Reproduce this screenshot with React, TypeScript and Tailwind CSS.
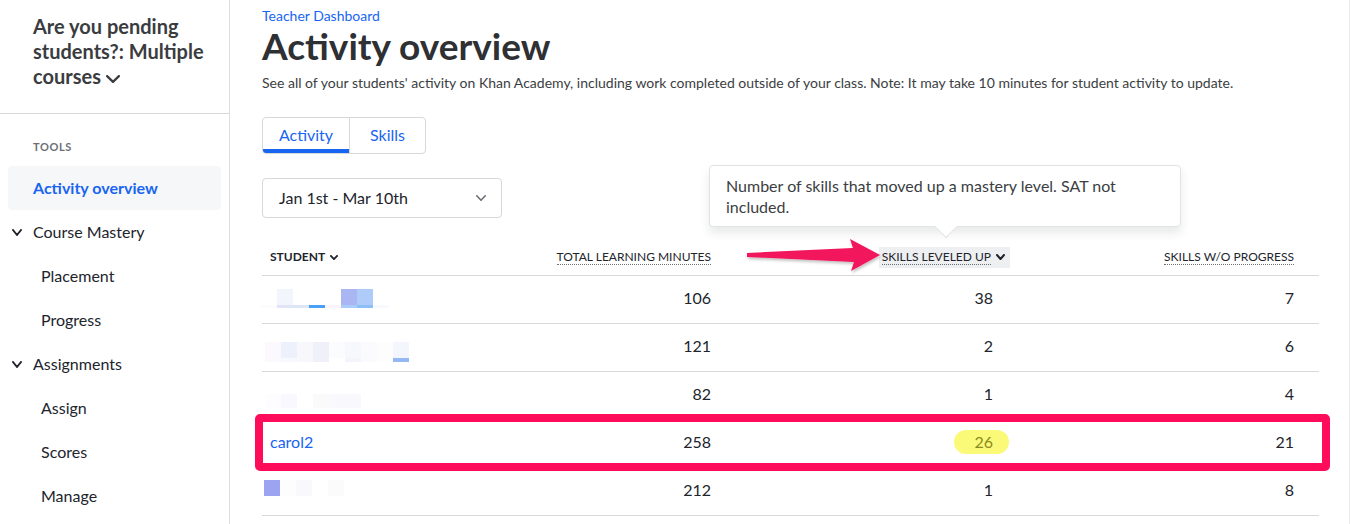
import React from "react";

type Cell = { t: string; b: string };

const Pixels = ({ cells, top, bottom, className }: { cells: Cell[]; top: number; bottom: number; className?: string }) => (
  <div className={"flex " + (className ?? "")}>
    {cells.map((c, i) => (
      <div key={i} className="flex flex-col w-[16px]">
        <div style={{ background: c.t, height: top }} />
        <div style={{ background: c.b, height: bottom }} />
      </div>
    ))}
  </div>
);

const Chev = ({ className, w = 10, h = 6, sw = 2, color = "#21242c" }: { className?: string; w?: number; h?: number; sw?: number; color?: string }) => (
  <svg className={className} width={w} height={h} viewBox={`0 0 ${w} ${h}`} fill="none">
    <path d={`M${sw / 2} ${sw / 2} L${w / 2} ${h - sw / 2} L${w - sw / 2} ${sw / 2}`} stroke={color} strokeWidth={sw} strokeLinecap="round" strokeLinejoin="round" />
  </svg>
);

const W = "#ffffff";

const row1: Cell[] = [
  { t: W, b: "#fcfcfe" },
  { t: "#f3f5fd", b: "#e1e4f7" },
  { t: W, b: "#dde6f9" },
  { t: W, b: "#4aa0f5" },
  { t: W, b: "#fbf5fb" },
  { t: "#aab5f3", b: "#a9cdf8" },
  { t: "#aecbf9", b: "#8dbef6" },
  { t: W, b: "#f7f9fe" },
];
const row2: Cell[] = [
  { t: "#fbf9fd", b: "#fbf9fd" },
  { t: "#edf1fc", b: "#f8f9fe" },
  { t: "#f8f7fc", b: "#f8f7fc" },
  { t: "#f0f0fb", b: "#f0f0fb" },
  { t: "#fafcfe", b: W },
  { t: "#f7f8fd", b: "#f5f3fc" },
  { t: "#fbfbfe", b: "#fbfbfe" },
  { t: "#fdfdfd", b: "#fdfdfd" },
  { t: "#f3f6fd", b: "#94b8f4" },
];
const row3: Cell[] = [
  { t: "#fdfdff", b: "#fdfdff" },
  { t: "#f8f8fe", b: "#f8f8fe" },
  { t: W, b: W },
  { t: "#fafafa", b: "#fafafa" },
  { t: "#f8f8fd", b: "#f8f8fd" },
  { t: "#f8f8fd", b: "#f8f8fd" },
];
const row5: Cell[] = [
  { t: "#9ca3f0", b: "#9ca3f0" },
  { t: "#fdfdfd", b: "#fdfdfd" },
  { t: "#f9f9fc", b: "#f9f9fc" },
  { t: W, b: W },
  { t: "#fbfbfb", b: "#fbfbfb" },
];

const SideItem = ({ children, indent }: { children: React.ReactNode; indent?: boolean }) => (
  <div className={"h-[44px] flex items-center text-[16px] text-[#21242c] " + (indent ? "pl-[41px]" : "pl-[33px]")}>{children}</div>
);

const SideGroup = ({ children }: { children: React.ReactNode }) => (
  <div className="h-[44px] flex items-center text-[16px] text-[#21242c] pl-[12px]">
    <Chev className="mr-[11px]" w={10} h={7} sw={2} />
    {children}
  </div>
);

export default function App() {
  return (
    <div className="flex w-[1350px] h-[524px] overflow-hidden bg-white text-[#21242c]" style={{ fontFamily: "Lato, 'Noto Sans', sans-serif" }}>
      {/* Sidebar */}
      <aside className="w-[230px] shrink-0 border-r border-[#dcdde0] flex flex-col">
        <div className="pl-[33px] pt-[14px] pb-[24px] border-b border-[#d6d8da]">
          <div className="w-[180px] text-[20px] leading-[25px] font-bold text-[#3a3c3f]">
            Are you pending students?: Multiple courses
            <Chev className="inline-block ml-[5px] align-middle" w={14} h={8} sw={2.2} color="#3a3c3f" />
          </div>
        </div>
        <div className="pt-[25px] pl-[33px] h-[16px] box-content text-[11px] leading-[16px] font-bold tracking-[0.6px] text-[#6b6f76]">TOOLS</div>
        <div className="mt-[11px] mx-[8px] h-[44px] rounded-[4px] bg-[#f6f7f9] flex items-center pl-[25px] text-[16px] font-bold text-[#1865f2]">
          Activity overview
        </div>
        <SideGroup>Course Mastery</SideGroup>
        <SideItem indent>Placement</SideItem>
        <SideItem indent>Progress</SideItem>
        <SideGroup>Assignments</SideGroup>
        <SideItem indent>Assign</SideItem>
        <SideItem indent>Scores</SideItem>
        <SideItem indent>Manage</SideItem>
      </aside>

      {/* Main */}
      <main className="relative flex-1 pl-[32px] pr-[30px] border-r border-[#ededed]">
        <div className="pt-[6px] text-[14px] leading-[20px] text-[#1865f2]">Teacher Dashboard</div>
        <h1 className="text-[37px] leading-[40px] font-bold text-[#2e3033]">Activity overview</h1>
        <p className="mt-[7px] text-[14px] leading-[20px] text-[#3b3e42]">
          See all of your students' activity on Khan Academy, including work completed outside of your class. Note: It may take 10 minutes for student activity to update.
        </p>

        {/* Tabs */}
        <div className="mt-[24px] inline-flex h-[37px] rounded-[4px] border border-[#d6d8da] overflow-hidden">
          <div className="relative w-[87px] flex items-center justify-center pb-[2px] text-[16px] text-[#1865f2] border-r border-[#d6d8da]">
            Activity
            <div className="absolute left-0 right-0 bottom-0 h-[4px] bg-[#1865f2]" />
          </div>
          <div className="w-[75px] flex items-center justify-center pb-[2px] text-[16px] text-[#1865f2]">Skills</div>
        </div>

        {/* Date select */}
        <div className="mt-[24px] w-[240px] h-[40px] rounded-[4px] border border-[#d6d8da] flex items-center justify-between pl-[16px] pr-[15px] pb-[1px] text-[16px] text-[#21242c]">
          <span>Jan 1st - Mar 10th</span>
          <Chev w={10} h={6} sw={1.6} color="#6b6f76" />
        </div>

        {/* Table */}
        <div className="mt-[19px] text-[16px]">
          <div className="flex items-center h-[39px] pt-[2px] pl-[8px] pr-[25px] border-b border-[#d6d8da] text-[12px] uppercase">
            <div className="flex-1 flex items-center font-bold text-[#21242c]">
              Student
              <Chev className="ml-[5px]" w={8} h={5} sw={1.8} />
            </div>
            <div className="w-[260px] flex justify-end">
              <span className="border-b border-dotted border-[#6b6f76] leading-[14px]">Total learning minutes</span>
            </div>
            <div className="w-[282px] flex justify-end">
              <span className="mr-[-17px] flex items-center h-[21px] bg-[#eeeff1] pl-[3px] pr-[5px]">
                <span className="border-b border-dotted border-[#6b6f76] leading-[14px]">Skills leveled up</span>
                <Chev className="ml-[5px]" w={9} h={6} sw={2} />
              </span>
            </div>
            <div className="w-[301px] flex justify-end">
              <span className="border-b border-dotted border-[#6b6f76] leading-[14px]">Skills w/o progress</span>
            </div>
          </div>

          {[
            { name: <Pixels className="ml-[-9px] mt-[1px]" cells={row1} top={16} bottom={3} />, a: 106, b: 38, c: 7 },
            { name: <Pixels className="ml-[-5px] mt-[12px]" cells={row2} top={16} bottom={4} />, a: 121, b: 2, c: 6 },
            { name: <Pixels className="ml-[-5px] mt-[14px]" cells={row3} top={14} bottom={0} />, a: 82, b: 1, c: 4 },
            { name: <span className="text-[#1865f2]">carol2</span>, a: 258, b: 26, c: 21, hl: true },
            { name: <Pixels className="ml-[-6px] mt-[-4px]" cells={row5} top={16} bottom={0} />, a: 212, b: 1, c: 8 },
          ].map((r, i) => (
            <div key={i} className="relative flex items-center h-[48px] pb-[3px] pl-[8px] pr-[25px] border-b border-[#d6d8da]">
              <div className="flex-1 flex items-center">{r.name}</div>
              <div className="w-[260px] text-right">{r.a}</div>
              <div className="w-[282px] flex justify-end">
                {r.hl ? (
                  <span className="relative text-[#8c8a1c]">
                    <span className="absolute left-[-20px] right-[-16px] top-[0px] bottom-[0px] rounded-full bg-[#fbfa78]" />
                    <span className="relative">{r.b}</span>
                  </span>
                ) : (
                  r.b
                )}
              </div>
              <div className="w-[301px] text-right">{r.c}</div>
              {r.hl && (
                <div className="absolute left-[-7px] right-[-11px] top-[-6px] bottom-[-4px] border-[8px] border-[#ff0d5a] rounded-[5px] pointer-events-none" />
              )}
            </div>
          ))}
        </div>

        {/* Tooltip */}
        <div className="absolute left-[479px] top-[165px] w-[472px] h-[62px] bg-white rounded-[4px] border border-[#e2e3e5] shadow-[0_6px_10px_rgba(33,36,44,0.10)] px-[16px] pt-[9px] text-[16px] leading-[21px] text-[#3b3e42]">
          Number of skills that moved up a mastery level. SAT not included.
          <div className="absolute left-[228px] bottom-[-9px] w-[16px] h-[16px] bg-white rotate-45 border-r border-b border-[#e2e3e5]" />
        </div>

        {/* Arrow */}
        <svg className="absolute left-[510px] top-[235px]" width="150" height="45" viewBox="0 0 150 45">
          <defs>
            <filter id="sh" x="-10%" y="-30%" width="120%" height="170%">
              <feDropShadow dx="1" dy="2" stdDeviation="1.5" floodColor="#000" floodOpacity="0.25" />
            </filter>
          </defs>
          <polygon
            points="7,18 113,13 110,4 140,20 111,36 114,27 7,22"
            fill="#f2135c"
            filter="url(#sh)"
          />
        </svg>
      </main>
    </div>
  );
}
